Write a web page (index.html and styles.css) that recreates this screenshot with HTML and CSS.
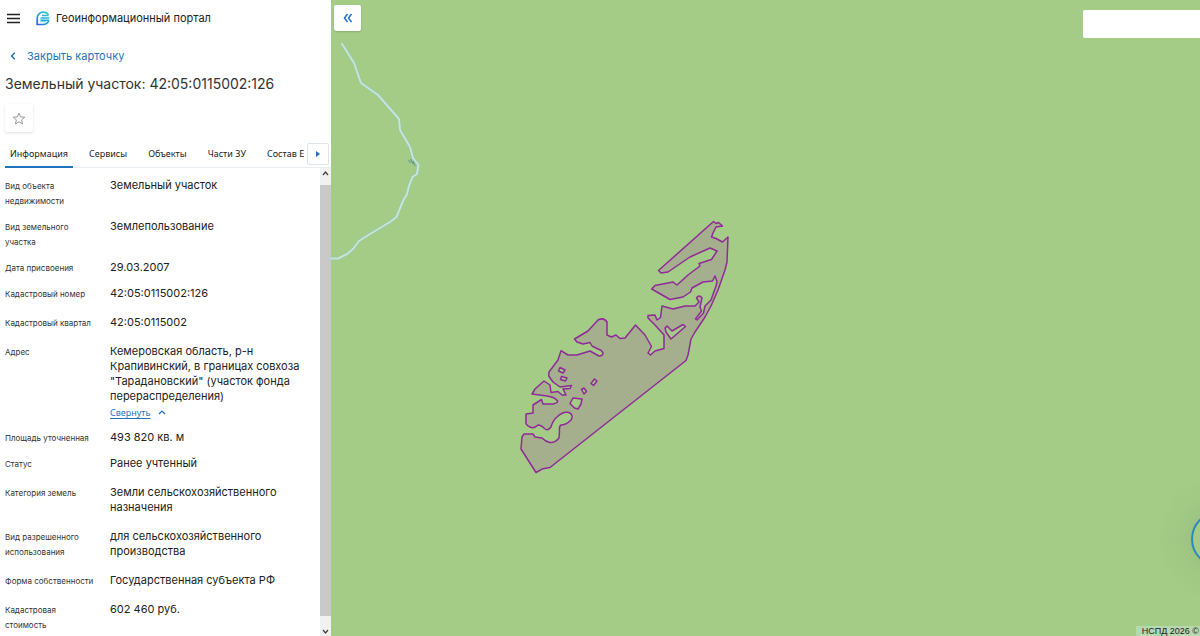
FILE: index.html
```html
<!DOCTYPE html>
<html lang="ru">
<head>
<meta charset="utf-8">
<meta name="viewport" content="width=device-width, initial-scale=1">
<title>Геоинформационный портал</title>
<link rel="stylesheet" href="styles.css">
</head>
<body>
<div class="app">
  <aside class="sidebar">
    <header class="topbar">
      <button class="icon-btn" type="button" aria-label="Меню">
        <svg width="13" height="11" viewBox="0 0 13 11"><path d="M0 1.500h13M0 5.500h13M0 9.500h13" stroke="#222" stroke-width="1.700"/></svg>
      </button>
      <svg class="logo" width="14" height="15" viewBox="0 0 14 15" fill="none">
        <defs><linearGradient id="lg" gradientUnits="userSpaceOnUse" x1="0" y1="15" x2="14" y2="0"><stop offset="0" stop-color="#2b55dc"/><stop offset=".5" stop-color="#22a5e4"/><stop offset="1" stop-color="#3fdcc6"/></linearGradient></defs>
        <path d="M12.500 4.200C11.500 2.200 9.600 1.200 7.300 1.200A6 6 0 0 0 1.200 7.200V13.500H7C10 13.500 12 11.800 12.900 9.300" stroke="url(#lg)" stroke-width="1.700"/>
        <path d="M6 4.600H12.500M4.800 7H13.500M4.800 9.300H13" stroke="url(#lg)" stroke-width="1.500"/>
        <path d="M4.800 6.500v4.200H10" stroke="#7cdcf0" stroke-width="1.200"/>
      </svg>
      <span class="brand">Геоинформационный портал</span>
    </header>
    <a class="back" href="#">
      <svg width="6" height="8" viewBox="0 0 6 8" fill="none"><path d="M4.800 .8L1.600 4l3.200 3.200" stroke="#1f6fb8" stroke-width="1.500"/></svg>
      <span>Закрыть карточку</span>
    </a>
    <h1 class="title">Земельный участок: 42:05:0115002:126</h1>
    <button class="star" type="button" aria-label="В избранное">
      <svg width="14" height="13" viewBox="0 0 14 13" fill="none"><path d="M7 1l1.600 3.900 4.200.3-3.200 2.700 1 4.100L7 9.800 3.400 12l1-4.100L1.200 5.200l4.200-.3z" stroke="#9a9a9a"/></svg>
    </button>
    <div class="tabbar">
      <nav class="tabs">
        <button class="tab tab-active" type="button">Информация</button>
        <button class="tab" type="button">Сервисы</button>
        <button class="tab" type="button">Объекты</button>
        <button class="tab" type="button">Части ЗУ</button>
        <button class="tab" type="button">Состав Е</button>
      </nav>
      <button class="tab-next" type="button" aria-label="Следующие вкладки">
        <svg width="4" height="6" viewBox="0 0 4 6"><path d="M0 0l4 3-4 3z" fill="#1f74bd"/></svg>
      </button>
    </div>
    <div class="panel">
      <dl class="props">
        <div class="row tight"><dt>Вид объекта недвижимости</dt><dd>Земельный участок</dd></div>
        <div class="row tight"><dt>Вид земельного участка</dt><dd>Землепользование</dd></div>
        <div class="row tight"><dt>Дата присвоения</dt><dd>29.03.2007</dd></div>
        <div class="row"><dt>Кадастровый номер</dt><dd>42:05:0115002:126</dd></div>
        <div class="row"><dt>Кадастровый квартал</dt><dd>42:05:0115002</dd></div>
        <div class="row tight"><dt>Адрес</dt><dd>Кемеровская область, р-н Крапивинский, в границах совхоза "Тарадановский" (участок фонда перераспределения)
          <a class="collapse" href="#"><span>Свернуть</span><svg width="8" height="5" viewBox="0 0 8 5" fill="none"><path d="M1 4l3-3 3 3" stroke="#1f74bd" stroke-width="1.200"/></svg></a></dd></div>
        <div class="row tight"><dt>Площадь уточненная</dt><dd>493 820 кв. м</dd></div>
        <div class="row"><dt>Статус</dt><dd>Ранее учтенный</dd></div>
        <div class="row"><dt>Категория земель</dt><dd>Земли сельскохозяйственного назначения</dd></div>
        <div class="row"><dt>Вид разрешенного использования</dt><dd>для сельскохозяйственного производства</dd></div>
        <div class="row"><dt>Форма собственности</dt><dd>Государственная субъекта РФ</dd></div>
        <div class="row"><dt>Кадастровая стоимость</dt><dd>602 460 руб.</dd></div>
      </dl>
      <div class="scrollbar">
        <button class="scroll-btn scroll-up" type="button" aria-label="Вверх"><svg width="7" height="5" viewBox="0 0 7 5" fill="none"><path d="M1 4l2.500-3L6 4" stroke="#444" stroke-width="1.300"/></svg></button>
        <div class="thumb"></div>
        <button class="scroll-btn scroll-down" type="button" aria-label="Вниз"><svg width="7" height="5" viewBox="0 0 7 5" fill="none"><path d="M1 1l2.500 3L6 1" stroke="#444" stroke-width="1.300"/></svg></button>
      </div>
    </div>
  </aside>
  <main class="map">
    <svg class="map-canvas" aria-label="Карта">
      <g transform="translate(-331 0)" fill="none" stroke-linejoin="round">
        <path d="M341.500 43L354 63 361 83 378 95 399 119 400 130 410 147 413 158 418.500 165 417 174 412.500 177 409 186 407 194 403 201 396.500 217 390 222 380 228 370 234 359 241 353 249 347 254 338 258.500 330 258.500" stroke="#98c5a6" stroke-width="3"/>
        <path d="M341.500 43L354 63 361 83 378 95 399 119 400 130 410 147 413 158 418.500 165 417 174 412.500 177 409 186 407 194 403 201 396.500 217 390 222 380 228 370 234 359 241 353 249 347 254 338 258.500 330 258.500" stroke="#c3e5db" stroke-width="2"/>
        <path d="M408.500 160l2 3m0-4l2.500 5m0-3l2 5" stroke="#6c9c91" stroke-width="1.200"/>
        <path fill="#a76c9c" fill-opacity=".3" fill-rule="evenodd" stroke="#8f2a98" stroke-width="1.500" d="M713.500 221.500L716 223.500 718.500 222.500 722.500 226 716 227 713 233 711.500 237 716 238.500 722.500 242 728 237 727 262 725 270 718 290 711 306 705 317 695 332 691 339 688 355 686 360.500 550 467.500 543 468.700 536 472.500 521 449 522 437 524 434 533 434 535 437 542 438Q546 442 550 442.500 555 443 559 438L559.500 431Q559 426 561 425 566 425 571 420 574 415 569 412.500 563 411 557 417 553 420 551 427 548 431 545 429 541 425 538 425 534 429 530 427 525 425 526 421V414L533 413V405L541.500 399.500 543 404 553 404Q558 403 557.500 401 555 397 547 396L532 394 535 389 544 381 550 385 551 392.500 558 391.500 562 395 566 395 563 389 570 388.500 571.500 385.500 560 387 553 382 548.700 376 549 372 558 360 561 350.700 568 355 577 355 590 351 599 356Q603 356 603 353 602 350 598 349L592 346 590 342.500 583 344 577 342 574.500 339 588 331 598 320Q604 317 607 322V335L611.500 337 616 335 620 338.500 625 338 635.500 325 645 335 651.500 346.500 648 353 650.500 355 655 351 664 348.500 664 335 655 325 648 318 648 315.500 655 315 657 320 660.500 317.500 662 306 673 309 685 306 695 306 699 302 696.500 298Q699 294 702 298L700 307 701.500 311 695.500 319 697 320 703.500 313 705 306 711 300 716 286 717 281.500 715 276 712.500 281 703 282 692 288 690.500 292 683 297 670 299.500 651.700 289 655 285.500 673 282 677 285 688 275 700 266 699 263.500 711.500 259.500 717 251 710 248 690 257 668 272 661 273 658.500 270.500Z
        M665 328L667 326 672 331 683 324.500 685.500 326.500 671 339 666 332Z
        M560 367.500L565 370 563 373 558.500 371Z M561.500 376.500L567 378 565.500 381 560.500 379.500Z
        M594.500 379L597 381 593.500 385.500 591 383.500Z M581.500 389.500L584 388 586.500 391.500 584 394Z
        M573 398L582 399 581 404 578 409 574.500 408 570 403.500Z"/>
      </g>
    </svg>
    <button class="collapse-panel" type="button" aria-label="Свернуть панель">
      <svg width="10" height="10" viewBox="0 0 10 10" fill="none"><path d="M4.500 1l-3 4 3 4M8.500 1l-3 4 3 4" stroke="#1f74bd" stroke-width="1.500"/></svg>
    </button>
    <input class="search" type="text" aria-label="Поиск">
    <button class="assistant" type="button" aria-label="Помощник"></button>
    <div class="copyright">НСПД 2026 ©</div>
  </main>
</div>
</body>
</html>
```

FILE: styles.css
```css
* { box-sizing: border-box; }
body { margin: 0; font-family: Inter, "Liberation Sans", sans-serif; color: #333; }
button { border: 0; padding: 0; background: none; font: inherit; color: inherit; display: flex; align-items: center; justify-content: center; }
a { color: #1f74bd; text-decoration: none; }
svg { display: block; flex: none; }

.app { display: flex; height: 100vh; overflow: hidden; }
.sidebar { width: 331px; flex: none; display: flex; flex-direction: column; background: #fff; }

.topbar { display: flex; align-items: center; height: 36px; padding-left: 7px; }
.icon-btn { width: 13px; height: 24px; }
.logo { margin: 0 6px 0 16px; }
.brand { font-size: 11px; color: #222; }
.back { display: flex; align-items: center; gap: 11px; height: 40px; padding-left: 10px; font-size: 11px; }
.title { margin: 0; padding-left: 5px; font-size: 14px; line-height: 16px; font-weight: 400; color: #333; }
.star { width: 28px; height: 28px; margin: 12px 0 0 5px; border-radius: 2px; box-shadow: 0 1px 3px rgba(0, 0, 0, .12); }

.tabbar { display: flex; align-items: center; height: 28px; margin: 8px 0 0 5px; padding-right: 2px; border-bottom: 1px solid #e8eef2; }
.tabs { display: flex; gap: 11px; flex: 1; min-width: 0; height: 28px; overflow: hidden; }
.tab { flex: none; height: 28px; padding: 2px 5px 0; font: 9px "Noto Sans", sans-serif; color: #222; border-bottom: 2px solid transparent; }
.tab-active { border-bottom-color: #1f74bd; }
.tab-next { flex: none; width: 22px; height: 22px; border: 1px solid #dbe5ee; border-radius: 2px; background: #fff; }

.panel { display: flex; flex: 1; min-height: 0; }
.props { flex: 1; min-width: 0; margin: 0; padding: 10px 20px 0 5px; overflow: hidden; }
.row { display: grid; grid-template-columns: 92px 1fr; column-gap: 13px; padding-bottom: 14px; line-height: 15px; }
.tight { padding-bottom: 11px; }
dt { padding-top: 1px; margin-bottom: -1px; font-size: 8px; }
dd { margin: 0; font-size: 11px; color: #222; }
.collapse { display: flex; align-items: center; gap: 8px; margin-top: 1px; margin-bottom: -1px; font: 9px/15px "Noto Sans", sans-serif; }
.collapse span { text-decoration: underline; text-underline-offset: 2px; }

.scrollbar { width: 11px; flex: none; display: flex; flex-direction: column; background: #f1f1f1; }
.scroll-btn { flex: none; }
.scroll-up { height: 17px; padding-bottom: 7px; }
.scroll-down { height: 20px; padding-top: 11px; }
.thumb { flex: 1; background: #c9c9c9; }

.map { position: relative; flex: 1; min-width: 0; overflow: hidden; background: #a5cc87; }
.map-canvas { width: 100%; height: 100%; }
.collapse-panel { position: absolute; left: 3px; top: 5px; width: 27px; height: 26px; border-radius: 2px; background: #fff; box-shadow: 0 1px 2px rgba(0, 0, 0, .15); }
.search { position: absolute; right: 0; top: 10px; width: 117px; height: 28px; border: 0; border-radius: 2px 0 0 2px; background: #fff; }
.assistant { position: absolute; right: -47px; bottom: 69px; width: 56px; height: 56px; border: 2px solid #2c86c0; border-radius: 50%; box-shadow: 0 0 36px rgba(60, 90, 50, .2); }
.copyright { position: absolute; right: 0; bottom: 0; padding: 0 1px 0 6px; font: 9px/10px "Liberation Sans", Arial, sans-serif; color: #222; background: #b7d9b0; }
```
